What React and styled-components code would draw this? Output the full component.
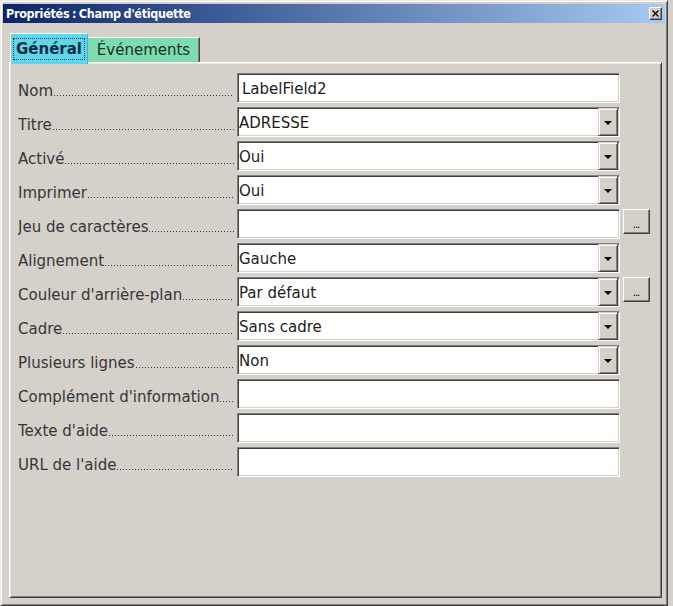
import React from 'react';
import styled, { createGlobalStyle } from 'styled-components';

const GlobalStyle = createGlobalStyle`
	html, body {
		margin: 0;
		padding: 0;
		background-color: #d5d0ca;
	}
	body {
		font-family: "DejaVu Sans", "Liberation Sans", sans-serif;
	}
`;

const Window = styled.div`
	box-sizing: border-box;
	width: 668px;
	height: 606px;
	display: flex;
	flex-direction: column;
	padding: 3px 2px 2px 2px;
	background-color: #d5d0ca;
	border: 1px solid;
	border-color: #ece9e4 #404040 #404040 #ece9e4;
	box-shadow: inset 1px 1px #fff, inset -1px -1px #808080;
`;

const TitleBar = styled.div`
	height: 19px;
	display: flex;
	align-items: center;
	justify-content: space-between;
	padding: 0 3px 0 3px;
	background: linear-gradient(to right, #0a246a, #a6caf0);
	color: #fff;
	font-family: "DejaVu Sans Condensed", "DejaVu Sans", sans-serif;
	font-stretch: condensed;
	font-weight: 700;
	font-size: 12.5px;
	letter-spacing: -0.3px;
	word-spacing: -1px;
`;

const CloseButton = styled.div`
	box-sizing: border-box;
	width: 13px;
	height: 13px;
	display: flex;
	align-items: center;
	justify-content: center;
	background-color: #d4d0c8;
	border: 1px solid;
	border-color: #fff #404040 #404040 #fff;
	box-shadow: inset -1px -1px #808080;
`;

const TabBar = styled.div`
	height: 39px;
	display: flex;
	align-items: flex-end;
	padding-left: 7px;
`;

const Tab = styled.div`
	box-sizing: border-box;
	position: relative;
	z-index: ${p => (p.$active ? 2 : 1)};
	display: flex;
	align-items: center;
	justify-content: center;
	width: ${p => p.$width}px;
	height: ${p => (p.$active ? 31 : 25)}px;
	margin-bottom: ${p => (p.$active ? -2 : 0)}px;
	background-color: ${p => (p.$active ? '#5dd6ee' : '#7edbae')};
	border-top: 1px solid #fff;
	border-left: ${p => (p.$active ? '1px solid #fff' : '0')};
	border-right: 1px solid ${p => (p.$active ? '#3fb6cc' : '#404040')};
	box-shadow: ${p => (p.$active ? 'none' : 'inset -1px 0 #808080')};
	color: ${p => (p.$active ? '#0b2a3e' : '#1c3026')};
	font-size: 15px;
	font-weight: ${p => (p.$active ? 700 : 400)};
`;

const Focus = styled.span`
	padding: 1px 2px;
	border: 1px dotted #1a3a4a;
	line-height: 18px;
`;

const Panel = styled.div`
	flex: 1;
	box-sizing: border-box;
	margin: 0 3px 5px 6px;
	padding: 10px 0 0 8px;
	border: 1px solid;
	border-color: #fff #404040 #404040 #fff;
	box-shadow: inset 1px 1px #ebe8e3, inset -1px -1px #808080;
	display: grid;
	grid-template-columns: 216px 383px 27px;
	grid-auto-rows: 30px;
	column-gap: 3px;
	row-gap: 4px;
	align-content: start;
`;

const Label = styled.div`
	grid-column: 1;
	display: flex;
	align-items: flex-end;
	padding-bottom: 3px;
	font-size: 15px;
	line-height: 17px;
	color: #363636;
	white-space: nowrap;
	overflow: hidden;
`;

const Leader = styled.span`
	flex: 1;
	height: 1px;
	margin: 0 0 4px 1px;
	background-image: linear-gradient(to right, #3a3a3a 0 1px, transparent 1px);
	background-size: 3px 1px;
	background-repeat: repeat-x;
`;

const Field = styled.div`
	grid-column: 2;
	box-sizing: border-box;
	display: flex;
	align-items: center;
	padding-left: ${p => p.$pad}px;
	background-color: #fff;
	border: 1px solid;
	border-color: #808080 #fff #fff #808080;
	box-shadow: inset 1px 1px #404040, inset -1px -1px #d4d0c8;
	font-size: 15px;
	color: #1c1c1c;
	overflow: hidden;
`;

const Value = styled.span`
	flex: 1;
	padding-top: 1px;
	white-space: nowrap;
`;

const DropButton = styled.div`
	box-sizing: border-box;
	width: 20px;
	height: 100%;
	margin-right: 1px;
	display: flex;
	align-items: center;
	justify-content: center;
	background-color: #d4d0c8;
	border: 1px solid;
	border-color: #d4d0c8 #404040 #404040 #d4d0c8;
	box-shadow: inset 1px 1px #fff, inset -1px -1px #808080;
`;

const Arrow = styled.span`
	width: 0;
	height: 0;
	border-left: 4px solid transparent;
	border-right: 4px solid transparent;
	border-top: 4px solid #000;
	margin-top: 1px;
`;

const MoreButton = styled.div`
	grid-column: 3;
	align-self: start;
	box-sizing: border-box;
	height: 25px;
	display: flex;
	align-items: center;
	justify-content: center;
	background-color: #d4d0c8;
	border: 1px solid;
	border-color: #fff #404040 #404040 #fff;
	box-shadow: inset -1px -1px #808080;
	font-size: 10px;
	color: #000;
	letter-spacing: -1px;
	padding: 5px 1px 0 0;
`;

const rows = [
	{ label: 'Nom', value: 'LabelField2', kind: 'text', pad: 4 },
	{ label: 'Titre', value: 'ADRESSE', kind: 'select' },
	{ label: 'Activé', value: 'Oui', kind: 'select' },
	{ label: 'Imprimer', value: 'Oui', kind: 'select' },
	{ label: 'Jeu de caractères', value: '', kind: 'text', more: true },
	{ label: 'Alignement', value: 'Gauche', kind: 'select' },
	{ label: "Couleur d'arrière-plan", value: 'Par défaut', kind: 'select', more: true },
	{ label: 'Cadre', value: 'Sans cadre', kind: 'select' },
	{ label: 'Plusieurs lignes', value: 'Non', kind: 'select' },
	{ label: "Complément d'information", value: '', kind: 'text' },
	{ label: "Texte d'aide", value: '', kind: 'text' },
	{ label: "URL de l'aide", value: '', kind: 'text' },
];

const PropertyRow = ({ row }) => (
	<>
		<Label>
			{row.label}
			<Leader />
		</Label>
		<Field $pad={row.pad || 1}>
			<Value>{row.value}</Value>
			{row.kind === 'select' && (
				<DropButton>
					<Arrow />
				</DropButton>
			)}
		</Field>
		{row.more && <MoreButton>...</MoreButton>}
	</>
);

const App = () => {
	return (
		<>
			<GlobalStyle />
			<Window>
				<TitleBar>
					<span>Propriétés : Champ d'étiquette</span>
					<CloseButton>
						<svg width="7" height="7" viewBox="0 0 7 7">
							<path d="M0.5 0.5 L6.5 6.5 M6.5 0.5 L0.5 6.5" stroke="#000" strokeWidth="1.4" />
						</svg>
					</CloseButton>
				</TitleBar>
				<TabBar>
					<Tab $active $width={78}>
						<Focus>Général</Focus>
					</Tab>
					<Tab $width={112}>Événements</Tab>
				</TabBar>
				<Panel>
					{rows.map(row => (
						<PropertyRow key={row.label} row={row} />
					))}
				</Panel>
			</Window>
		</>
	);
};

export default App;
